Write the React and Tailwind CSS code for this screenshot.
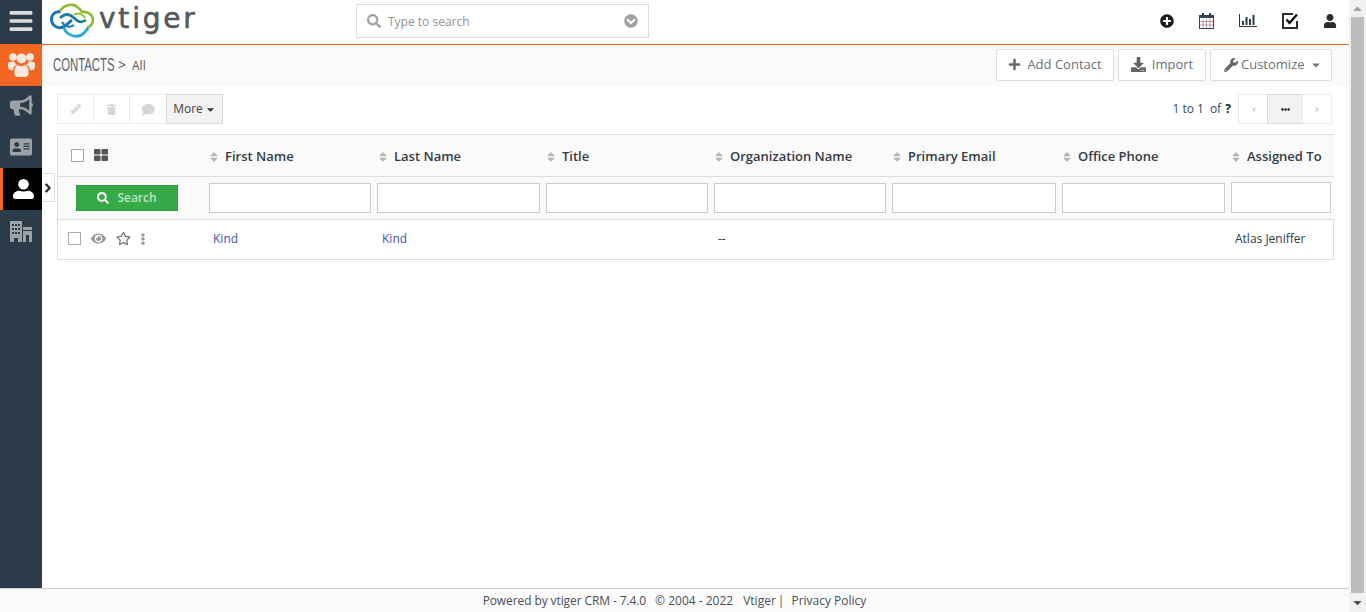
import React from "react";
import { FaBars, FaBullhorn, FaAddressCard, FaUser, FaChevronRight, FaSearch, FaPlusCircle, FaPlus, FaDownload, FaWrench, FaCaretDown, FaPencilAlt, FaTrash, FaComment, FaEye, FaRegStar, FaEllipsisV, FaEllipsisH, FaCaretLeft, FaCaretRight, FaCaretUp, FaChevronCircleDown, FaSort } from "react-icons/fa";

const columns = [
  ["First Name", "w-[169px]"],
  ["Last Name", "w-[168px]"],
  ["Title", "w-[168px]"],
  ["Organization Name", "w-[178px]"],
  ["Primary Email", "w-[170px]"],
  ["Office Phone", "w-[169px]"],
  ["Assigned To", "flex-1"],
];

function Logo() {
  return (
    <div className="w-[155px] shrink-0 ml-[8px] flex items-start">
      <svg width="44" height="35" viewBox="0 0 44 35" fill="none" className="mt-[3px] shrink-0">
        <path d="M9 10 C12 3 20 0 26 3 C29 5 31 7 32 9 C38 8 43 12 43 17 C43 21 41 23 37 25" stroke="#8dbb2f" strokeWidth="2.6" />
        <path d="M10 9 C4 8 1 13 1.5 17 C2 23 8 26 13 24 C17 22 19 19 22 17" stroke="#1a76b4" strokeWidth="3" />
        <path d="M14 25 C17 33 28 36 34 30 C36 28 37 27 38 25" stroke="#29a7df" strokeWidth="2.8" />
        <path d="M10 15 C15 10 20 11 24 15 C27 18 31 21 36 17" stroke="#1c7f9c" strokeWidth="2.6" />
        <path d="M12 19 C15 24 20 25 24 22" stroke="#1a76b4" strokeWidth="2" />
        <path d="M24 12 C28 9 33 11 35 15" stroke="#8dbb2f" strokeWidth="2" />
      </svg>
      <span className="ml-[5px] text-[28px] leading-[38px] tracking-[2.8px] text-[#55585b] [-webkit-text-stroke:0.6px_#55585b] font-['DejaVu_Sans',sans-serif]">vtiger</span>
    </div>
  );
}

function UsersIcon() {
  return (
    <svg width="27" height="25" viewBox="0 0 27 25" fill="#fbe9df">
      <circle cx="5" cy="5" r="3.8" />
      <circle cx="22" cy="5" r="3.8" />
      <circle cx="13.5" cy="6.5" r="5" />
      <path d="M0 11.5 C1 9.5 3 9.5 6 9.5 C7 11 8 12 9 12.8 C6 14 5 16 5 18.5 L1 17.5 C0 16.5 0 13 0 11.5z" />
      <path d="M27 11.5 C26 9.5 24 9.5 21 9.5 C20 11 19 12 18 12.8 C21 14 22 16 22 18.5 L26 17.5 C27 16.5 27 13 27 11.5z" />
      <path d="M6.5 19 C6.5 15.5 8 13.5 10 13 C12 14.5 15 14.5 17 13 C19 13.5 20.5 15.5 20.5 19 L20.5 22 C20.5 24 18.5 25 17 25 L10 25 C8.5 25 6.5 24 6.5 22z" />
    </svg>
  );
}

function PersonIcon() {
  return (
    <svg width="21" height="20" viewBox="0 0 21 20" fill="#ffffff">
      <circle cx="10.5" cy="5.3" r="5.3" />
      <path d="M0 17.5 C0 14 3 11.8 6 11.8 C8.5 12.8 12.5 12.8 15 11.8 C18 11.8 21 14 21 17.5 C21 19 20 20 18.5 20 L2.5 20 C1 20 0 19 0 17.5z" />
    </svg>
  );
}

function BuildingIcon() {
  return (
    <svg width="22" height="21" viewBox="0 0 22 21" fill="#9ea2a6">
      <path d="M0 0h12v21H8v-4H4v4H0z" />
      <path d="M13 6h9v3h-9zM13 10h9v11h-3v-7h-3v7h-3z" />
      <g fill="#2c3b49">
        <rect x="2" y="3" width="2" height="2" /><rect x="5" y="3" width="2" height="2" /><rect x="8" y="3" width="2" height="2" />
        <rect x="2" y="7" width="2" height="2" /><rect x="5" y="7" width="2" height="2" /><rect x="8" y="7" width="2" height="2" />
        <rect x="2" y="11" width="2" height="2" /><rect x="5" y="11" width="2" height="2" /><rect x="8" y="11" width="2" height="2" />
      </g>
    </svg>
  );
}

function BarIcon() {
  return (
    <svg width="18" height="13" viewBox="0 0 18 13" fill="#2c3b49">
      <rect x="0" y="0" width="1" height="13" /><rect x="0" y="12" width="18" height="1" />
      <rect x="3" y="7" width="2" height="4" /><rect x="6.5" y="3" width="2" height="8" /><rect x="10" y="5" width="2" height="6" /><rect x="13.5" y="1" width="2" height="10" />
    </svg>
  );
}

function CalendarIcon() {
  return (
    <svg width="15" height="16" viewBox="0 0 15 16" fill="none">
      <rect x="0.5" y="2.5" width="14" height="13" fill="#fff" stroke="#3a4654" />
      <rect x="0.5" y="2.5" width="14" height="2.5" fill="#3a4654" />
      <rect x="3" y="0" width="2" height="4" fill="#2c3b49" />
      <rect x="10" y="0" width="2" height="4" fill="#2c3b49" />
      <path d="M4 6v9M7.5 6v9" stroke="#7fa8c9" />
      <path d="M11 6v9" stroke="#d98a9a" />
      <path d="M1 8.5h13M1 12h13" stroke="#d98a9a" />
    </svg>
  );
}

function CheckIcon() {
  return (
    <svg width="16" height="16" viewBox="0 0 16 16" fill="none">
      <path d="M11 1H1v14h14V8" stroke="#2c2c2c" strokeWidth="2" />
      <path d="M4.5 6.5 L7.5 10 L15 1.5" stroke="#111" strokeWidth="2.4" />
    </svg>
  );
}

function GridIcon() {
  return (
    <svg width="14" height="12" viewBox="0 0 14 12" fill="#555555" className="-mt-[2px]">
      <rect x="0" y="0" width="6.5" height="5.5" rx="1" /><rect x="7.5" y="0" width="6.5" height="5.5" rx="1" />
      <rect x="0" y="6.5" width="6.5" height="5.5" rx="1" /><rect x="7.5" y="6.5" width="6.5" height="5.5" rx="1" />
    </svg>
  );
}

function ActionBtn({ children, className = "" }) {
  return (
    <div className={`h-[30px] border border-[#ececec] bg-white flex items-center justify-center text-[#d6d6d6] ${className}`}>{children}</div>
  );
}

function OutlineBtn({ children, className = "" }) {
  return (
    <div className={`h-[32px] border border-[#dddddd] rounded-[2px] bg-white flex items-center text-[13px] text-[#6b6f73] ${className}`}>{children}</div>
  );
}

function Box({ className = "" }) {
  return <div className={`w-[13px] h-[13px] border border-[#a9a9a9] bg-white ${className}`} />;
}

export default function App() {
  return (
    <div className="w-[1366px] h-[612px] overflow-hidden flex bg-white font-['Open_Sans',sans-serif] text-[13px] text-[#2f3b46]">
      <div className="w-[1349px] h-full flex flex-col">
        <header className="h-[45px] shrink-0 flex border-b border-[#f26522]">
          <div className="w-[42px] bg-[#2c3b49] flex items-center justify-center text-[#d9dbdd] pb-[2px]">
            <FaBars size={26} />
          </div>
          <Logo />
          <div className="ml-[151px] mt-[4px] w-[293px] h-[34px] border border-[#dddddd] flex items-center pl-[10px] pr-[10px] text-[#8f9194]">
            <FaSearch size={14} className="text-[#a2a2a2]" />
            <span className="ml-[7px] flex-1 text-[12px] pt-px">Type to search</span>
            <FaChevronCircleDown size={14} className="text-[#a2a2a2]" />
          </div>
          <div className="ml-auto flex items-center text-[#1c1c1c] pb-[3px] pr-[12px] gap-[25px]">
            <FaPlusCircle size={14} />
            <CalendarIcon />
            <BarIcon />
            <CheckIcon />
            <FaUser size={14} className="text-[#2c2c2c]" />
          </div>
        </header>
        <div className="flex-1 flex min-h-0">
          <aside className="w-[42px] shrink-0 bg-[#2c3b49] flex flex-col">
            <div className="h-[41px] bg-[#f26522] flex items-center justify-center pb-[2px]"><UsersIcon /></div>
            <div className="h-[41px] flex items-center justify-center text-[#9ea2a6] pb-[3px]"><FaBullhorn size={23} /></div>
            <div className="h-[41px] flex items-center justify-center text-[#9ea2a6] pb-px"><FaAddressCard size={22} /></div>
            <div className="h-[42px] bg-black border-l-[3px] border-[#f26522] flex items-center justify-center pl-px"><PersonIcon /></div>
            <div className="h-[42px] flex items-center justify-center"><BuildingIcon /></div>
          </aside>
          <main className="flex-1 min-w-0 flex flex-col relative">
            <div className="absolute left-0 top-[128px] w-[13px] h-[29px] bg-white border border-l-0 border-[#dddddd] flex items-center pl-px text-[#1f2d3a]">
              <FaChevronRight size={10} stroke="currentColor" strokeWidth={40} />
            </div>
            <div className="h-[41px] shrink-0 bg-[#fafafa] flex items-center pl-[11px] pr-[17px]">
              <span className="font-['Liberation_Sans',sans-serif] text-[18px] text-[#59636e] scale-x-[0.63] origin-left w-[61px] whitespace-nowrap">CONTACTS</span>
              <span className="ml-[4px] text-[14px] text-[#555] -mt-[2px]">&gt;</span>
              <span className="ml-[6px] text-[12px] text-[#555]">All</span>
              <div className="ml-auto flex gap-[4px] mb-[2px]">
                <OutlineBtn className="w-[118px] justify-center gap-[6px]"><FaPlus size={13} className="text-[#666]" />Add Contact</OutlineBtn>
                <OutlineBtn className="w-[88px] justify-center gap-[6px]"><FaDownload size={15} className="text-[#666]" />Import</OutlineBtn>
                <OutlineBtn className="w-[122px] pl-[13px] gap-[3px]"><FaWrench size={14} className="text-[#666]" />Customize<FaCaretDown size={12} className="ml-[2px] text-[#777]" /></OutlineBtn>
              </div>
            </div>
            <div className="h-[48px] shrink-0 pl-[15px] pr-[17px] pb-[2px] flex items-center">
              <ActionBtn className="w-[37px]"><FaPencilAlt size={11} /></ActionBtn>
              <ActionBtn className="w-[37px] -ml-px"><FaTrash size={11} /></ActionBtn>
              <ActionBtn className="w-[38px] -ml-px"><FaComment size={13} /></ActionBtn>
              <div className="h-[30px] w-[57px] -ml-px border border-[#d9d9d9] bg-[#f2f2f2] flex items-center justify-center text-[12px] text-[#444] gap-[2px]">More<FaCaretDown size={11} className="text-[#333]" /></div>
              <div className="ml-auto flex items-center text-[12px] text-[#2f4a63]">
                <span>1 to 1</span>
                <span className="ml-[6px]">of <b className="ml-[1px] text-[#222]">?</b></span>
                <ActionBtn className="w-[30px] ml-[7px]"><FaCaretLeft size={9} /></ActionBtn>
                <div className="h-[30px] w-[36px] -ml-px border border-[#d9d9d9] bg-[#f2f2f2] flex items-center justify-center text-[#222]"><FaEllipsisH size={9} /></div>
                <ActionBtn className="w-[30px] -ml-px"><FaCaretRight size={9} /></ActionBtn>
              </div>
            </div>
            <div className="ml-[15px] mr-[15px] border-t border-l border-[#dddddd] border-b">
              <div className="h-[42px] bg-[#fafafa] flex items-center border-b border-[#dddddd] text-[13px] font-semibold text-[#333c45]">
                <div className="w-[146px] flex items-center pl-[13px] gap-[10px]">
                  <Box />
                  <GridIcon />
                </div>
                {columns.map(([name, w]) => (
                  <div key={name} className={`${w} flex items-center pl-[4px] pt-[2px] gap-[5px] whitespace-nowrap`}>
                    <FaSort size={12} className="text-[#b5b5b5]" />{name}
                  </div>
                ))}
              </div>
              <div className="h-[43px] bg-[#fafafa] flex items-center border-b border-[#dddddd]">
                <div className="w-[151px] pl-[18px]">
                  <div className="w-[102px] h-[26px] bg-[#35aa47] border border-[#2f9a40] flex items-center justify-center gap-[8px] text-[#bfe6c6] text-[12px] font-semibold">
                    <FaSearch size={12} className="text-white" />Search
                  </div>
                </div>
                <div className="flex-1 flex gap-[6px] pr-[3px]">
                  <input className="w-[162px] h-[30px] border border-[#cccccc] bg-white" />
                  <input className="w-[163px] h-[30px] border border-[#cccccc] bg-white" />
                  <input className="w-[162px] h-[30px] border border-[#cccccc] bg-white" />
                  <input className="w-[172px] h-[30px] border border-[#cccccc] bg-white" />
                  <input className="w-[164px] h-[30px] border border-[#cccccc] bg-white" />
                  <input className="w-[163px] h-[30px] border border-[#cccccc] bg-white" />
                  <input className="w-[100px] h-[31px] border border-[#cccccc] bg-white -mt-px" />
                </div>
              </div>
              <div className="h-[39px] pb-[2px] flex items-center border-r border-[#dddddd] text-[12px] text-[#2f3b46]">
                <div className="w-[155px] flex items-center pl-[10px]">
                  <Box />
                  <FaEye size={15} className="ml-[10px] text-[#999]" />
                  <FaRegStar size={15} className="ml-[10px] text-[#777]" />
                  <FaEllipsisV size={12} className="ml-[6px] text-[#999]" />
                </div>
                <div className="w-[169px] text-[#3f51b5]">Kind</div>
                <div className="w-[336px] text-[#3f51b5]">Kind</div>
                <div className="w-[517px] text-[#333]">--</div>
                <div>Atlas Jeniffer</div>
              </div>
            </div>
            <div className="flex-1" />
          </main>
        </div>
        <footer className="h-[24px] shrink-0 border-t border-[#cccccc] bg-[#fbfbfb] flex items-center justify-center text-[12px] text-[#4a4f55] pt-px whitespace-nowrap">
          <span className="tracking-[-0.1px]">Powered by vtiger CRM - 7.4.0</span>
          <span className="ml-[9px]">© 2004 - 2022</span>
          <span className="ml-[10px]">Vtiger</span>
          <span className="ml-[2px]">|</span>
          <span className="ml-[7px]">Privacy Policy</span>
        </footer>
      </div>
      <div className="w-[17px] h-full bg-[#f1f1f1] flex flex-col items-center">
        <div className="h-[17px] shrink-0 flex items-center justify-center text-[#a3a3a3]"><FaCaretUp size={13} /></div>
        <div className="w-[13px] flex-1 bg-[#bcbcbc]" />
        <div className="h-[19px] shrink-0 flex items-center justify-center text-[#505050]"><FaCaretDown size={13} /></div>
      </div>
    </div>
  );
}
